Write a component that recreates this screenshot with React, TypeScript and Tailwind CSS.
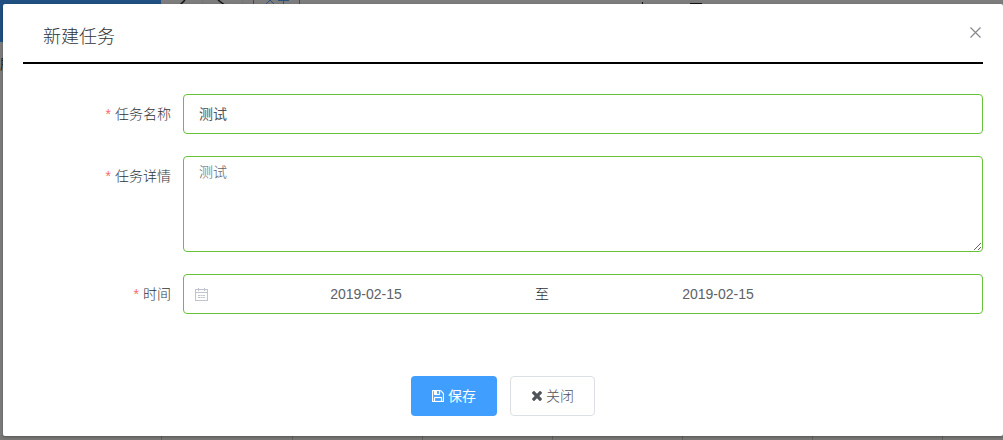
import type { ReactNode } from 'react';

function SaveIcon() {
  return (
    <svg viewBox="128 128 1536 1536" className="h-3 w-3" fill="currentColor" stroke="currentColor" strokeWidth="30">
      <path d="M512 1536h768v-384h-768v384zm896 0h128v-896q0-14-10-38.5t-20-34.5l-281-281q-10-10-34-20t-39-10v416q0 40-28 68t-68 28h-576q-40 0-68-28t-28-68v-416h-128v1280h128v-416q0-40 28-68t68-28h832q40 0 68 28t28 68v416zm-384-928v-320q0-13-9.5-22.5t-22.5-9.5h-192q-13 0-22.5 9.5t-9.5 22.5v320q0 13 9.5 22.5t22.5 9.5h192q13 0 22.5-9.5t9.5-22.5zm640 32v928q0 40-28 68t-68 28h-1344q-40 0-68-28t-28-68v-1344q0-40 28-68t68-28h928q40 0 88 20t76 48l280 280q28 28 48 76t20 88z" />
    </svg>
  );
}

function TimesIcon() {
  return (
    <svg viewBox="302 430 1188 1188" className="h-2.5 w-2.5" fill="currentColor">
      <path
        transform="translate(0 60)"
        d="M1490 1322q0 40-28 68l-136 136q-28 28-68 28t-68-28l-294-294-294 294q-28 28-68 28t-68-28l-136-136q-28-28-28-68t28-68l294-294-294-294q-28-28-28-68t28-68l136-136q28-28 68-28t68 28l294 294 294-294q28-28 68-28t68 28l136 136q28 28 28 68t-28 68l-294 294 294 294q28 28 28 68z"
      />
    </svg>
  );
}

function CalendarIcon() {
  return (
    <svg viewBox="0 0 13 13" className="h-[13px] w-[13px] text-[#c0c4cc]" fill="none" stroke="currentColor">
      <path d="M.5 1.500h12v11H.5zM.5 4.500h12M3.500 0v3M9.500 0v3" strokeWidth="1.15" />
      <path d="M3 7.500h7M3 9.500h7" strokeDasharray="2 .5" />
    </svg>
  );
}

function Field({ label, className, children }: { label: string; className: string; children: ReactNode }) {
  return (
    <div className={`flex ${className}`}>
      <div className="w-40 shrink-0 pr-3 text-right leading-10 text-[#303338]">
        <span className="mr-1 text-[#f56c6c]">*</span>
        {label}
      </div>
      {children}
    </div>
  );
}

function Backdrop() {
  return (
    <div className="flex h-full w-full flex-col overflow-hidden bg-[#7d7d7d]">
      <div className="flex h-[42px]">
        <div className="w-[161px] bg-[#205081]" />
        <div className="flex h-4 w-[92px]">
          <svg viewBox="0 0 92 16" className="h-4 w-[92px]" fill="none">
            <path d="M24 0 18 6M57 0l8 6" stroke="#151515" strokeWidth="1.5" />
            <path d="M41.5 0v16M81.5 0v16" stroke="#777" />
          </svg>
        </div>
        <div className="flex h-4 w-[47px] justify-center border-x border-[#2b527a] text-[#2b527a]">
          <svg viewBox="0 0 30 6" className="h-1.5 w-[30px]" fill="none" stroke="currentColor">
            <path d="M8 0 4 4M8 0l4 4M16 .5h11M21.5 0v4" />
          </svg>
        </div>
        <svg viewBox="0 0 80 6" className="ml-[335px] h-1.5 w-20" fill="none" stroke="#111">
          <path d="M7.5 2v2M55 3.5h12" />
        </svg>
      </div>
      <div className="grow pt-3">
        <span className="inline-block text-sm leading-5 font-normal text-[#252629]">所</span>
      </div>
      <div className="flex h-[5px] bg-[#7a7777]">
        <div className="w-[162px] border-r border-[#646262]" />
        <div className="w-[131px] border-r border-[#646262]" />
        <div className="w-[130px] border-r border-[#646262]" />
        <div className="w-[130px] border-r border-[#646262]" />
        <div className="w-[130px] border-r border-[#646262]" />
        <div className="w-[130px] border-r border-[#646262]" />
        <div className="w-[130px] border-r border-[#646262]" />
      </div>
    </div>
  );
}

export default function App() {
  return (
    <div className="relative h-[440px] w-[1003px] overflow-hidden font-['Liberation_Sans','Noto_Sans_CJK_SC',sans-serif] text-sm font-light">
      <Backdrop />
      <section className="absolute top-1 left-[3px] flex h-[432px] w-[1000px] flex-col rounded-xs bg-white px-5 shadow-[0_1px_3px_rgba(0,0,0,0.3)]">
        <header className="flex h-[60px] shrink-0 justify-between border-b-2 border-black pl-5">
          <h1 className="pt-[21px] text-lg leading-6 font-light text-[#303338]">新建任务</h1>
          <button aria-label="关闭" className="mt-[23px] mr-[2px] h-[11px] w-[11px] text-[#85888e]">
            <svg viewBox="0 0 11 11" className="h-[11px] w-[11px]" stroke="currentColor" strokeWidth="1.2">
              <path d="M.5.5l10 10M10.500.5l-10 10" />
            </svg>
          </button>
        </header>
        <Field label="任务名称" className="mt-[30px] h-10">
          <input
            defaultValue="测试"
            className="h-10 grow rounded border border-[#67c23a] px-[15px] pb-0.5 font-normal text-[#505359] outline-none"
          />
        </Field>
        <Field label="任务详情" className="mt-[22px] h-24">
          <textarea
            defaultValue="测试"
            className="h-24 grow resize-y rounded border border-[#67c23a] px-[15px] py-[5px] leading-[21px] text-[#606266] outline-none"
          />
        </Field>
        <Field label="时间" className="mt-[22px] h-10">
          <div className="flex h-10 grow items-center rounded border border-[#67c23a] pl-[11px] font-normal text-[#606266]">
            <CalendarIcon />
            <span className="ml-[1px] w-[314px] text-center">2019-02-15</span>
            <span className="w-[38px] text-center font-light text-[#303338]">至</span>
            <span className="w-[314px] text-center">2019-02-15</span>
          </div>
        </Field>
        <footer className="mt-[62px] flex gap-[13px] pl-[388px]">
          <button className="flex h-10 w-[86px] items-center justify-center gap-1 rounded bg-[#409eff] font-normal text-white">
            <SaveIcon />
            保存
          </button>
          <button className="flex h-10 w-[85px] items-center justify-center gap-1 rounded border border-[#dcdfe6] pl-px text-[#505359]">
            <TimesIcon />
            关闭
          </button>
        </footer>
      </section>
    </div>
  );
}
